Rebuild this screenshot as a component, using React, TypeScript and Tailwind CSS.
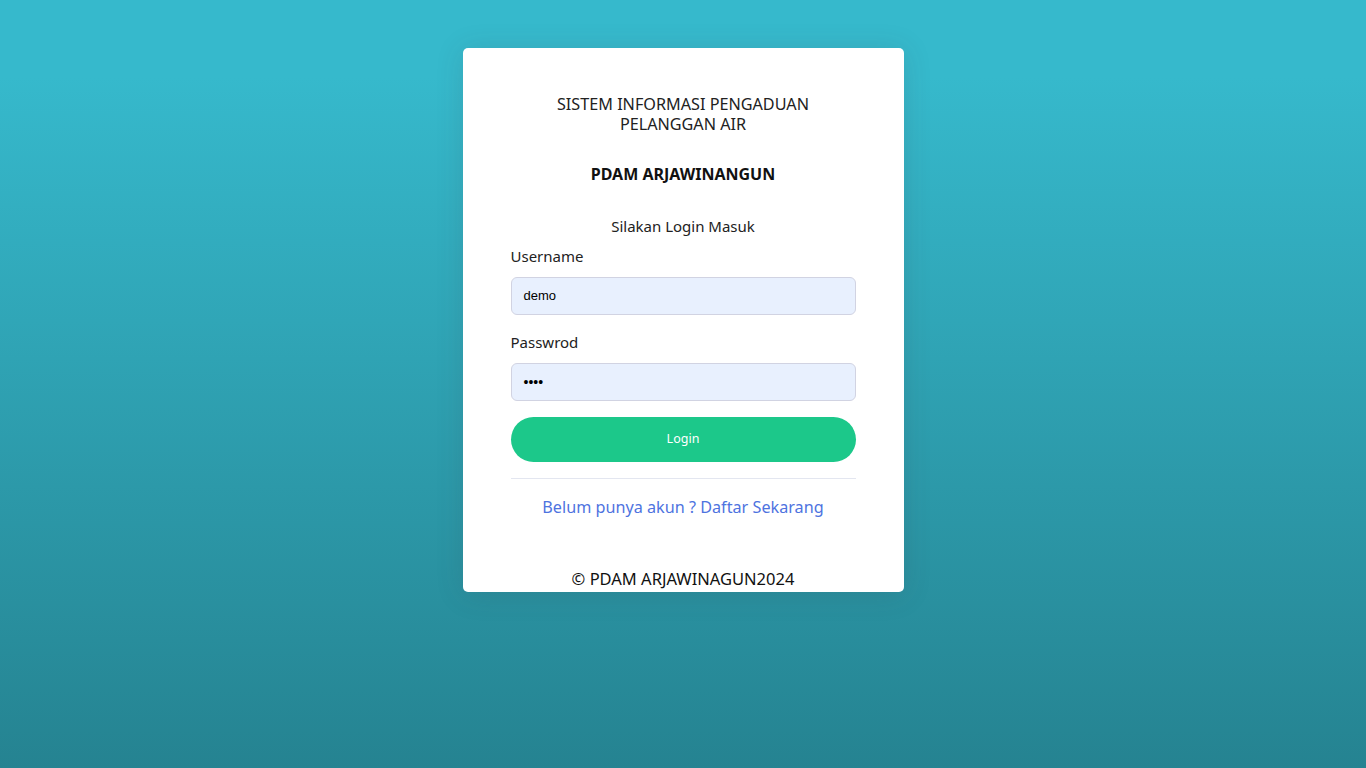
export default function App() {
  return (
    <div
      className="min-h-[768px] w-full flex justify-center bg-[linear-gradient(180deg,#36b9cc_10%,#258391_100%)]"
      style={{ fontFamily: '"Noto Sans", "Open Sans", sans-serif' }}
    >
      <div className="mt-[48px] mb-auto w-[441px] bg-white rounded-[5px] shadow-[0_0.15rem_1.75rem_0_rgba(58,59,69,0.15)]">
        <div className="px-[48px] pt-[46px] pb-[3px] text-[#3a3b45]">
          <div className="text-center text-[16.2px] leading-[20px] text-[#222]">
            SISTEM INFORMASI PENGADUAN
            <br />
            PELANGGAN AIR
          </div>
          <div className="mt-[30px] text-center text-[16px] leading-[20px] font-bold text-[#111]">
            PDAM ARJAWINANGUN
          </div>
          <div className="mt-[32px] text-center text-[15px] leading-[20px] text-[#222]">
            Silakan Login Masuk
          </div>
          <div className="mt-[10px] text-[15px] leading-[20px] text-[#222]">Username</div>
          <div className="mt-[11px] h-[38px] rounded-[6px] border border-[#d1d3e2] bg-[#e8f0fe] flex items-center px-[12px] text-[13px] text-black" style={{ fontFamily: '"Liberation Sans", Arial, sans-serif' }}>
            demo
          </div>
          <div className="mt-[17px] text-[15px] leading-[20px] text-[#222]">Passwrod</div>
          <div className="mt-[11px] h-[38px] rounded-[6px] border border-[#d1d3e2] bg-[#e8f0fe] flex items-center px-[12px] text-[14px] text-black" style={{ fontFamily: '"Liberation Sans", Arial, sans-serif' }}>
            ••••
          </div>
          <div className="mt-[16px] h-[45px] rounded-full bg-[#1cc88a] flex items-center justify-center text-white text-[12.5px]">
            Login
          </div>
          <div className="mt-[16px] h-px bg-[#e3e6f0]" />
          <div className="mt-[17px] text-center text-[16.2px] leading-[22px] text-[#4e73df]">
            Belum punya akun ? Daftar Sekarang
          </div>
          <div className="mt-[51px] text-center text-[16.5px] leading-[20px] text-[#111]">
            © PDAM ARJAWINAGUN2024
          </div>
        </div>
      </div>
    </div>
  );
}
